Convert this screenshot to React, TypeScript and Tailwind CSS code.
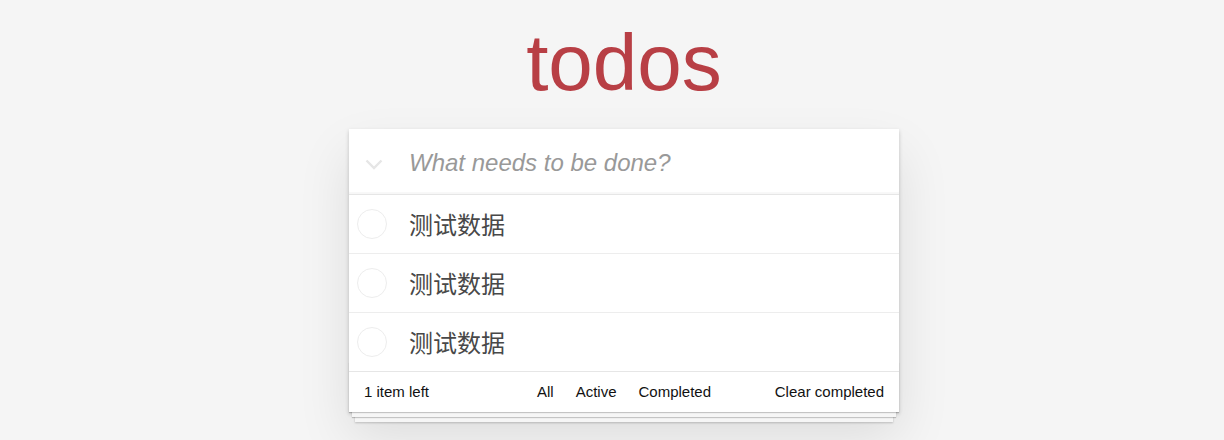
import React from "react";

const todos = ["测试数据", "测试数据", "测试数据"];

const filters = ["All", "Active", "Completed"];

export default function App() {
  return (
    <div className="min-h-[440px] bg-[#f5f5f5] pl-6 font-['Liberation_Sans','Noto_Sans_CJK_SC',sans-serif] text-[14px] text-[#111]">
      {/* title */}
      <h1 className="pt-[23px] text-center text-[80px] leading-[80px] font-extralight text-[#b83f45]">
        todos
      </h1>

      {/* card */}
      <section className="mx-auto mt-[26px] w-[550px] bg-white shadow-[0_2px_4px_0_rgba(0,0,0,0.2),0_25px_50px_0_rgba(0,0,0,0.1)]">
        <header className="flex h-[65px] items-center shadow-[inset_0_-2px_1px_rgba(0,0,0,0.03)]">
          <div className="flex w-[60px] pl-[16px] pt-[5px]">
            <svg width="18" height="11" viewBox="0 0 18 11" fill="none">
              <polyline points="1.5,1.5 9,9 16.5,1.5" stroke="#e6e6e6" strokeWidth="2.4" />
            </svg>
          </div>
          <span className="pt-[2px] text-[24px] italic text-[#999]">What needs to be done?</span>
        </header>

        <ul className="border-t border-[#e6e6e6]">
          {todos.map((t, i) => (
            <li
              key={i}
              className="flex h-[59px] items-center border-b border-[#ededed] last:h-[58px] last:border-b-0"
            >
              <div className="flex w-[60px] pl-2">
                <span className="h-[30px] w-[30px] rounded-full border border-[#ededed]" />
              </div>
              <span className="pt-[3px] text-[24px] text-[#484848]">{t}</span>
            </li>
          ))}
        </ul>

        {/* footer */}
        <footer className="relative grid h-[41px] grid-cols-[1fr_auto_1fr] items-center border-t border-[#e6e6e6] px-[15px] pt-[1px] text-[15px] before:absolute before:inset-x-0 before:bottom-0 before:h-[50px] before:overflow-hidden before:content-[''] before:shadow-[0_1px_1px_rgba(0,0,0,0.2),0_8px_0_-3px_#f6f6f6,0_9px_1px_-3px_rgba(0,0,0,0.2),0_16px_0_-6px_#f6f6f6,0_17px_2px_-6px_rgba(0,0,0,0.2)]">
          <span className="relative">1 item left</span>
          <ul className="relative flex gap-[2px]">
            {filters.map((f) => (
              <li key={f} className="mx-[3px] px-[7px] py-[3px]">
                {f}
              </li>
            ))}
          </ul>
          <span className="relative justify-self-end">Clear completed</span>
        </footer>
      </section>
    </div>
  );
}
